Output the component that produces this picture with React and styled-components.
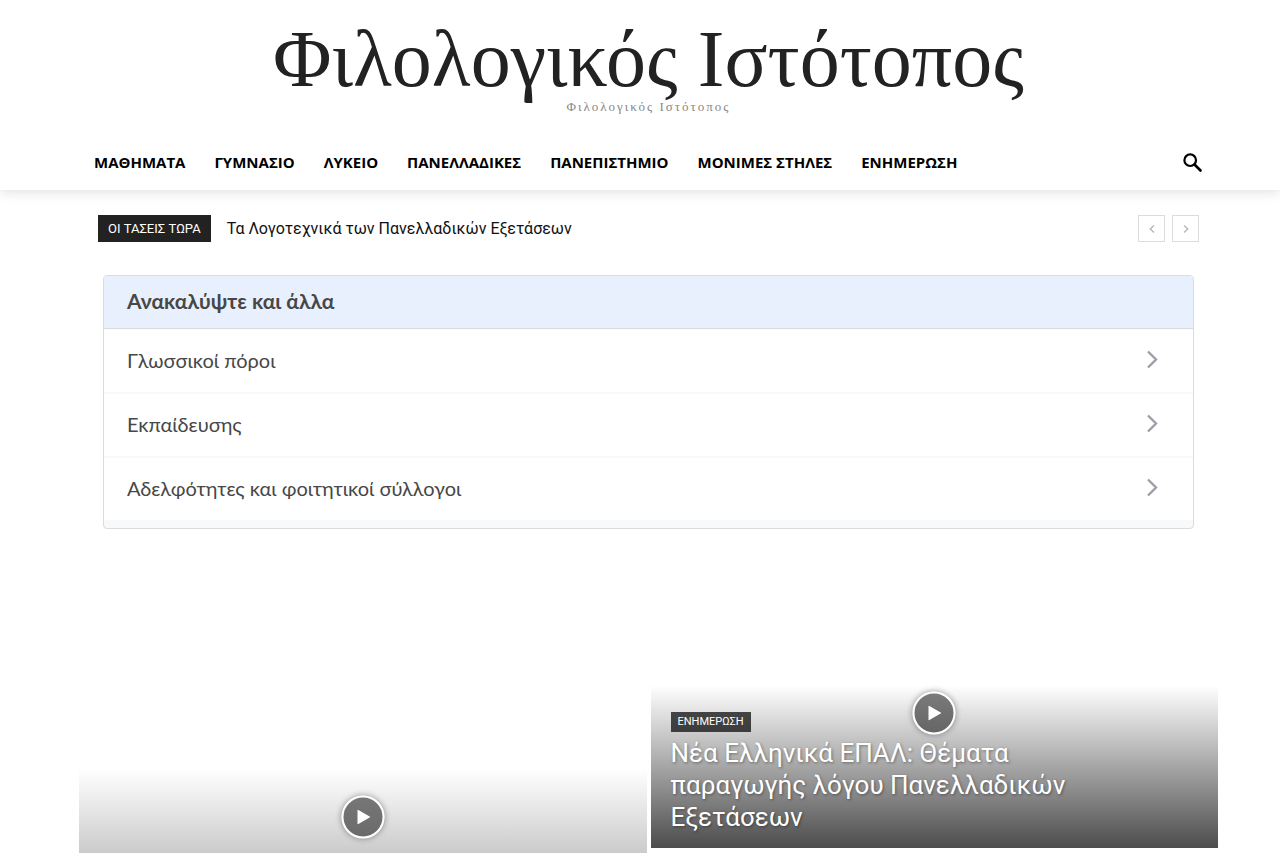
import React from 'react';
import styled, { createGlobalStyle } from 'styled-components';

const GlobalStyle = createGlobalStyle`
  * {
    box-sizing: border-box;
  }

  body {
    margin: 0;
    background: #fff;
    font-family: Roboto, 'Liberation Sans', sans-serif;
    color: #111;
  }

  a {
    color: inherit;
    text-decoration: none;
  }

  button {
    padding: 0;
    font: inherit;
    cursor: pointer;
  }
`;

const Header = styled.header`
  padding: 19px 62px 4px 79px;
  box-shadow: 0 2px 12px rgba(0, 0, 0, 0.13);
`;

const Logo = styled.a`
  display: block;
  text-align: center;
  font-family: 'Liberation Serif', serif;
`;

const LogoTitle = styled.span`
  display: block;
  font-size: 80px;
  line-height: 80px;
  color: #222;
  white-space: nowrap;
`;

const LogoTagline = styled.span`
  display: block;
  font-size: 13px;
  line-height: 16px;
  letter-spacing: 2px;
  color: #888;
`;

const NavBar = styled.nav`
  display: flex;
  align-items: center;
  justify-content: space-between;
  height: 48px;
  margin-top: 23px;
  padding: 0 15px;
`;

const Menu = styled.ul`
  display: flex;
  gap: 29px;
  margin: 0;
  padding: 0;
  list-style: none;
  font: 700 15px/24px 'Open Sans', sans-serif;
  color: #000;
  white-space: nowrap;
`;

const SearchButton = styled.button`
  display: flex;
  border: 0;
  background: none;
`;

const Main = styled.main`
  padding: 25px 62px 0 79px;
`;

const Trending = styled.section`
  display: flex;
  align-items: center;
  padding: 0 19px;
`;

const TrendingLabel = styled.span`
  padding: 0 10px;
  background: #222;
  color: #fff;
  font-size: 13px;
  line-height: 27px;
`;

const TrendingLink = styled.a`
  flex: 1;
  margin-left: 16px;
  font-size: 16px;
  line-height: 24px;
`;

const Pager = styled.div`
  display: flex;
  gap: 7px;
`;

const PagerButton = styled.button`
  display: flex;
  align-items: center;
  justify-content: center;
  width: 27px;
  height: 27px;
  border: 1px solid #dcdcdc;
  background: #fff;
`;

const Discover = styled.section`
  margin: 33px 24px 0;
  padding-bottom: 6px;
  border: 1px solid #dadce0;
  border-radius: 4px;
  background: #f8f9fa;
  overflow: hidden;
  font-family: Lato, sans-serif;
  color: #474747;
`;

const DiscoverTitle = styled.h2`
  margin: 0 0 1px;
  padding: 0 23px 2px;
  border-bottom: 1px solid #dadce0;
  background: #e8f0fe;
  font-size: 21px;
  line-height: 50px;
`;

const DiscoverRow = styled.a`
  display: flex;
  align-items: center;
  justify-content: space-between;
  height: 64px;
  padding: 0 32px 2px 23px;
  border-bottom: 2px solid #f8f9fa;
  background: #fff;
  font-size: 20px;
`;

const Grid = styled.section`
  display: grid;
  grid-template-columns: 1fr 1fr;
  grid-template-rows: 271px 205px;
  gap: 4px;
  margin-top: 48px;
`;

const Card = styled.article`
  position: relative;
  display: flex;
  align-items: flex-end;
  grid-row: ${props => (props.$tall ? 'span 2' : 'auto')};
  padding: 0 20px 15px;
  background: linear-gradient(
    to bottom,
    rgba(0, 0, 0, 0) 40%,
    rgba(0, 0, 0, 0.7) 100%
  );
`;

const PlayBadge = styled.span`
  position: absolute;
  top: 50%;
  left: 50%;
  display: flex;
  align-items: center;
  justify-content: center;
  width: 43px;
  height: 43px;
  border: 2px solid #fff;
  border-radius: 50%;
  background: rgba(0, 0, 0, 0.5);
  box-shadow: 0 0 6px rgba(0, 0, 0, 0.4);
  transform: translate(-50%, -50%);
`;

const CardText = styled.div`
  max-width: 400px;
`;

const Category = styled.a`
  display: inline-block;
  padding: 0 7px;
  background: rgba(0, 0, 0, 0.7);
  color: #fff;
  font-size: 11px;
  line-height: 20px;
  vertical-align: top;
`;

const CardTitle = styled.h3`
  margin: 5px 0 0;
  font-size: 26px;
  line-height: 32px;
  font-weight: 400;
  color: #fff;
  text-shadow: 1px 1px 3px rgba(0, 0, 0, 0.4);
`;

const menu = [
  'ΜΑΘΗΜΑΤΑ',
  'ΓΥΜΝΑΣΙΟ',
  'ΛΥΚΕΙΟ',
  'ΠΑΝΕΛΛΑΔΙΚΕΣ',
  'ΠΑΝΕΠΙΣΤΗΜΙΟ',
  'ΜΟΝΙΜΕΣ ΣΤΗΛΕΣ',
  'ΕΝΗΜΕΡΩΣΗ',
];

const topics = [
  'Γλωσσικοί πόροι',
  'Εκπαίδευσης',
  'Αδελφότητες και φοιτητικοί σύλλογοι',
];

const Play = () => (
  <PlayBadge>
    <svg width="15" height="15" viewBox="0 0 15 15" aria-hidden="true">
      <path d="M2 0v15l13-7.5z" fill="#fff" />
    </svg>
  </PlayBadge>
);

const App = () => {
  return (
    <>
      <GlobalStyle />
      <Header>
        <Logo href="#">
          <LogoTitle>Φιλολογικός Ιστότοπος</LogoTitle>
          <LogoTagline>Φιλολογικός Ιστότοπος</LogoTagline>
        </Logo>
        <NavBar>
          <Menu>
            {menu.map(item => (
              <li key={item}>
                <a href="#">{item}</a>
              </li>
            ))}
          </Menu>
          <SearchButton type="button" aria-label="Αναζήτηση">
            <svg width="21" height="21" viewBox="0 0 21 21" fill="none">
              <circle cx="8.2" cy="8.2" r="5.8" stroke="#000" strokeWidth="2.2" />
              <path d="M12.5 12.5l6 6" stroke="#000" strokeWidth="2.7" strokeLinecap="round" />
            </svg>
          </SearchButton>
        </NavBar>
      </Header>

      <Main>
        <Trending>
          <TrendingLabel>ΟΙ ΤΑΣΕΙΣ ΤΩΡΑ</TrendingLabel>
          <TrendingLink href="#">
            Τα Λογοτεχνικά των Πανελλαδικών Εξετάσεων
          </TrendingLink>
          <Pager>
            <PagerButton type="button" aria-label="Προηγούμενο">
              <svg width="6" height="8" viewBox="0 0 6 8" fill="none">
                <path d="M5 .5L1.2 4 5 7.5" stroke="#b4b4b4" strokeWidth="1.3" />
              </svg>
            </PagerButton>
            <PagerButton type="button" aria-label="Επόμενο">
              <svg width="6" height="8" viewBox="0 0 6 8" fill="none">
                <path d="M1 .5L4.8 4 1 7.5" stroke="#b4b4b4" strokeWidth="1.3" />
              </svg>
            </PagerButton>
          </Pager>
        </Trending>

        <Discover>
          <DiscoverTitle>Ανακαλύψτε και άλλα</DiscoverTitle>
          {topics.map(topic => (
            <DiscoverRow href="#" key={topic}>
              {topic}
              <svg width="16" height="20" viewBox="0 0 16 20" fill="none">
                <path d="M3 1.5l8 8-8 8" stroke="#9aa0a6" strokeWidth="2.4" />
              </svg>
            </DiscoverRow>
          ))}
        </Discover>

        <Grid>
          <Card $tall>
            <Play />
          </Card>
          <Card>
            <Play />
            <CardText>
              <Category href="#">ΕΝΗΜΕΡΩΣΗ</Category>
              <CardTitle>
                <a href="#">
                  Νέα Ελληνικά ΕΠΑΛ: Θέματα παραγωγής λόγου Πανελλαδικών
                  Εξετάσεων
                </a>
              </CardTitle>
            </CardText>
          </Card>
          <Card />
        </Grid>
      </Main>
    </>
  );
};

export default App;
